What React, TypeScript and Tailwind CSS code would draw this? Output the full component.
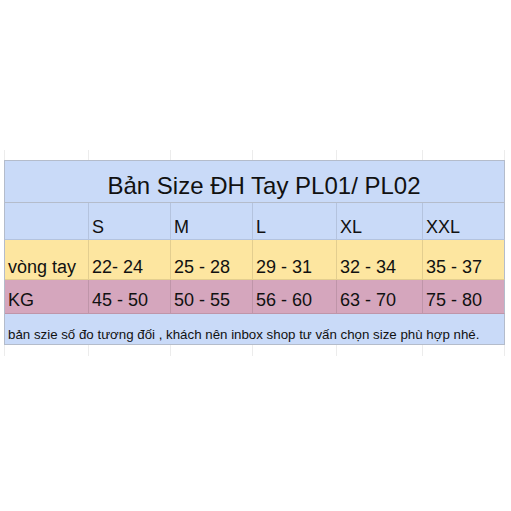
const cols = ["w-[84px]", "w-[82px]", "w-[82px]", "w-[84px]", "w-[86px]", "w-[82px]"];

const rows = [
  { label: "", values: ["S", "M", "L", "XL", "XXL"], bg: "bg-[#c9daf8]", h: "h-[37px]", pb: "pb-[3px]" },
  { label: "vòng tay", values: ["22- 24", "25 - 28", "29 - 31", "32 - 34", "35 - 37"], bg: "bg-[#fde6a0]", h: "h-[40px]", pb: "pb-[3px]" },
  { label: "KG", values: ["45 - 50", "50 - 55", "56 - 60", "63 - 70", "75 - 80"], bg: "bg-[#d5a6bd]", h: "h-[34px]", pb: "pb-[4px]" },
];

function Stubs({ h }: { h: string }) {
  return (
    <div className={`flex ${h}`}>
      <div className="w-[4px]" />
      <div className="flex border-l border-[#ececec]">
        {cols.map((c, i) => (
          <div key={i} className={`${c} border-r border-[#ececec]`} />
        ))}
      </div>
    </div>
  );
}

export default function App() {
  return (
    <div
      className="w-[511px] h-[511px] bg-white text-[#111] overflow-hidden"
      style={{ fontFamily: '"Liberation Sans", Arial, sans-serif' }}
    >
      <div className="h-[150px]" />
      <Stubs h="h-[10px]" />
      <div className="flex">
        <div className="w-[4px]" />
        <div className="flex flex-col border-l border-t border-[#b4bccb]">
          {/* title */}
          <div className="flex h-[42px] w-[500px] items-end justify-center bg-[#c9daf8] border-r border-b border-[#b4bccb] pl-[19px] pb-[4px] text-[24px] leading-none">
            Bản Size ĐH Tay PL01/ PL02
          </div>
          {rows.map((r, ri) => (
            <div key={ri} className={`flex ${r.h} ${r.bg}`}>
              {[r.label, ...r.values].map((v, i) => (
                <div
                  key={i}
                  className={`${cols[i]} flex items-end pl-[3px] ${r.pb} border-r border-b border-black/10 text-[18px] leading-none whitespace-nowrap ${i === 5 ? "border-r-[#b4bccb]" : ""}`}
                >
                  {v}
                </div>
              ))}
            </div>
          ))}
          {/* note */}
          <div className="flex h-[31px] w-[500px] items-end bg-[#c9daf8] border-r border-b border-[#b4bccb] pl-[3px] pb-[3px] text-[13.3px] leading-none whitespace-nowrap">
            bản szie số đo tương đối , khách nên inbox shop tư vấn chọn size phù hợp nhé.
          </div>
        </div>
      </div>
      <Stubs h="h-[11px]" />
    </div>
  );
}
